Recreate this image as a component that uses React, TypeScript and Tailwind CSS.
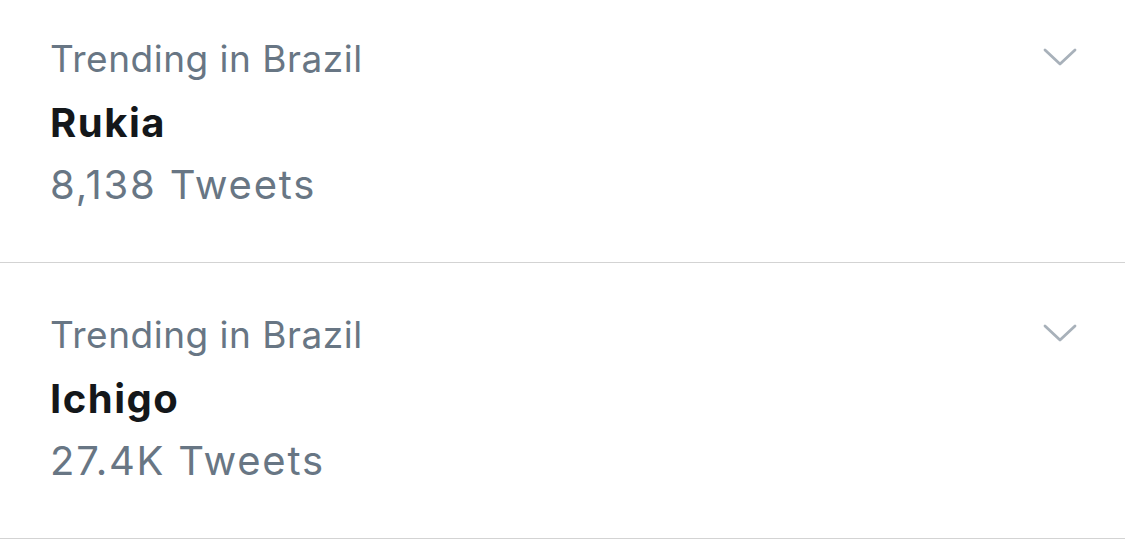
import React from 'react';

const trends = [
  { place: 'Trending in Brazil', name: 'Rukia', count: '8,138 Tweets' },
  { place: 'Trending in Brazil', name: 'Ichigo', count: '27.4K Tweets' },
];

function Chevron() {
  return (
    <svg width="34" height="20" viewBox="0 0 34 20" fill="none" className="block">
      <path d="M2 3 L17 17 L32 3" stroke="#a8b1ba" strokeWidth="2.8" strokeLinecap="round" strokeLinejoin="round" />
    </svg>
  );
}

export default function App() {
  return (
    <div className="w-[1125px] h-[542px] bg-white overflow-hidden" style={{ fontFamily: 'Inter, "Liberation Sans", sans-serif' }}>
      <div className="-mt-[13px]">
        {trends.map((t) => (
          <div key={t.name} className="h-[276px] border-b border-[#d3d3d3] flex justify-between pl-[50px] pr-[48px]">
            <div className="pt-[40px] leading-[64px]">
              <div className="text-[37px] tracking-[0.5px] text-[#687684]">{t.place}</div>
              <div className="text-[40px] font-bold text-[#14171a] tracking-[1.5px] leading-[63px]">{t.name}</div>
              <div className="text-[40px] text-[#687684] tracking-[1.8px] leading-[62px]">{t.count}</div>
            </div>
            <div className="pt-[60px]">
              <Chevron />
            </div>
          </div>
        ))}
      </div>
    </div>
  );
}
